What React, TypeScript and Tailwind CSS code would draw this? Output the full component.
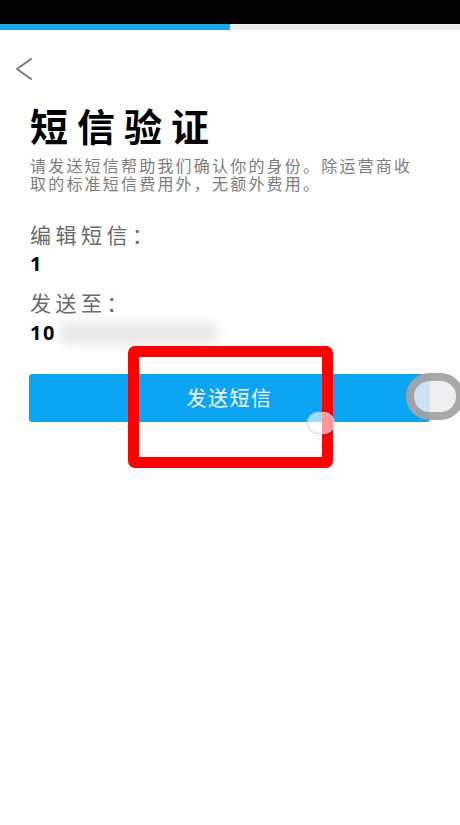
const cjk = { fontFamily: '"Noto Sans CJK SC", "Noto Sans", sans-serif' };
const num = { fontFamily: '"Noto Sans", "Liberation Sans", sans-serif' };

const App = () => {
  return (
    <div className="relative w-[460px] h-[825px] overflow-hidden bg-white" style={cjk}>
      {/* status bar + progress */}
      <div className="h-[24px] bg-black" />
      <div className="flex h-[6px] bg-[#ececec]">
        <div className="w-[230px] bg-[#1aa6ee]" />
      </div>

      {/* back */}
      <div className="pl-[15px] pt-[28px] h-[76px]">
        <svg width="18" height="22" viewBox="0 0 18 22" fill="none">
          <polyline points="16,1 2,11 16,21" stroke="#7a7a7a" strokeWidth="2" strokeLinecap="round" strokeLinejoin="round" />
        </svg>
      </div>

      <div className="px-[30px]">
        <h1 className="text-[38px] leading-none font-bold text-black tracking-[9px]">短信验证</h1>
        <p className="mt-[12px] text-[16px] leading-[18px] text-[#7d7d7d] tracking-[2.2px]">
          请发送短信帮助我们确认你的身份。除运营商收取的标准短信费用外，无额外费用。
        </p>

        <div className="mt-[30px] text-[21px] leading-[24px] text-[#6a6a6a] tracking-[4.5px]">编辑短信：</div>
        <div className="mt-[6px] text-[20px] leading-[24px] font-bold text-black" style={num}>1</div>

        <div className="mt-[14px] text-[21px] leading-[24px] text-[#6a6a6a] tracking-[4.5px]">发送至：</div>
        <div className="mt-[7px] flex items-center h-[24px]">
          <span className="text-[20px] leading-[24px] font-bold text-black tracking-[1.5px]" style={num}>10</span>
          <span className="ml-[2px] w-[160px] h-[22px] rounded-full bg-[#d8d8d8] opacity-60 blur-[6px]" />
        </div>

        <button className="mt-[29px] w-[401px] -ml-[1px] h-[48px] rounded-[3px] bg-[#0ba5f4] text-white text-[20px] tracking-[1.5px]">
          发送短信
        </button>
      </div>

      {/* overlays from the recording */}
      <div className="absolute left-[128px] top-[346px] w-[205px] h-[122px] border-[11px] border-[#ff0000] rounded-[7px]" />
      <div className="absolute left-[406px] top-[373px] w-[58px] h-[47px] rounded-full border-[8px] border-[#8a8a8a]/70 bg-[#ececf0]/85" />
      <div className="absolute left-[307px] top-[412px] w-[28px] h-[22px] rounded-full border-[1.5px] border-[#d6d0ee] bg-white/60" />
    </div>
  );
};

export default App;
